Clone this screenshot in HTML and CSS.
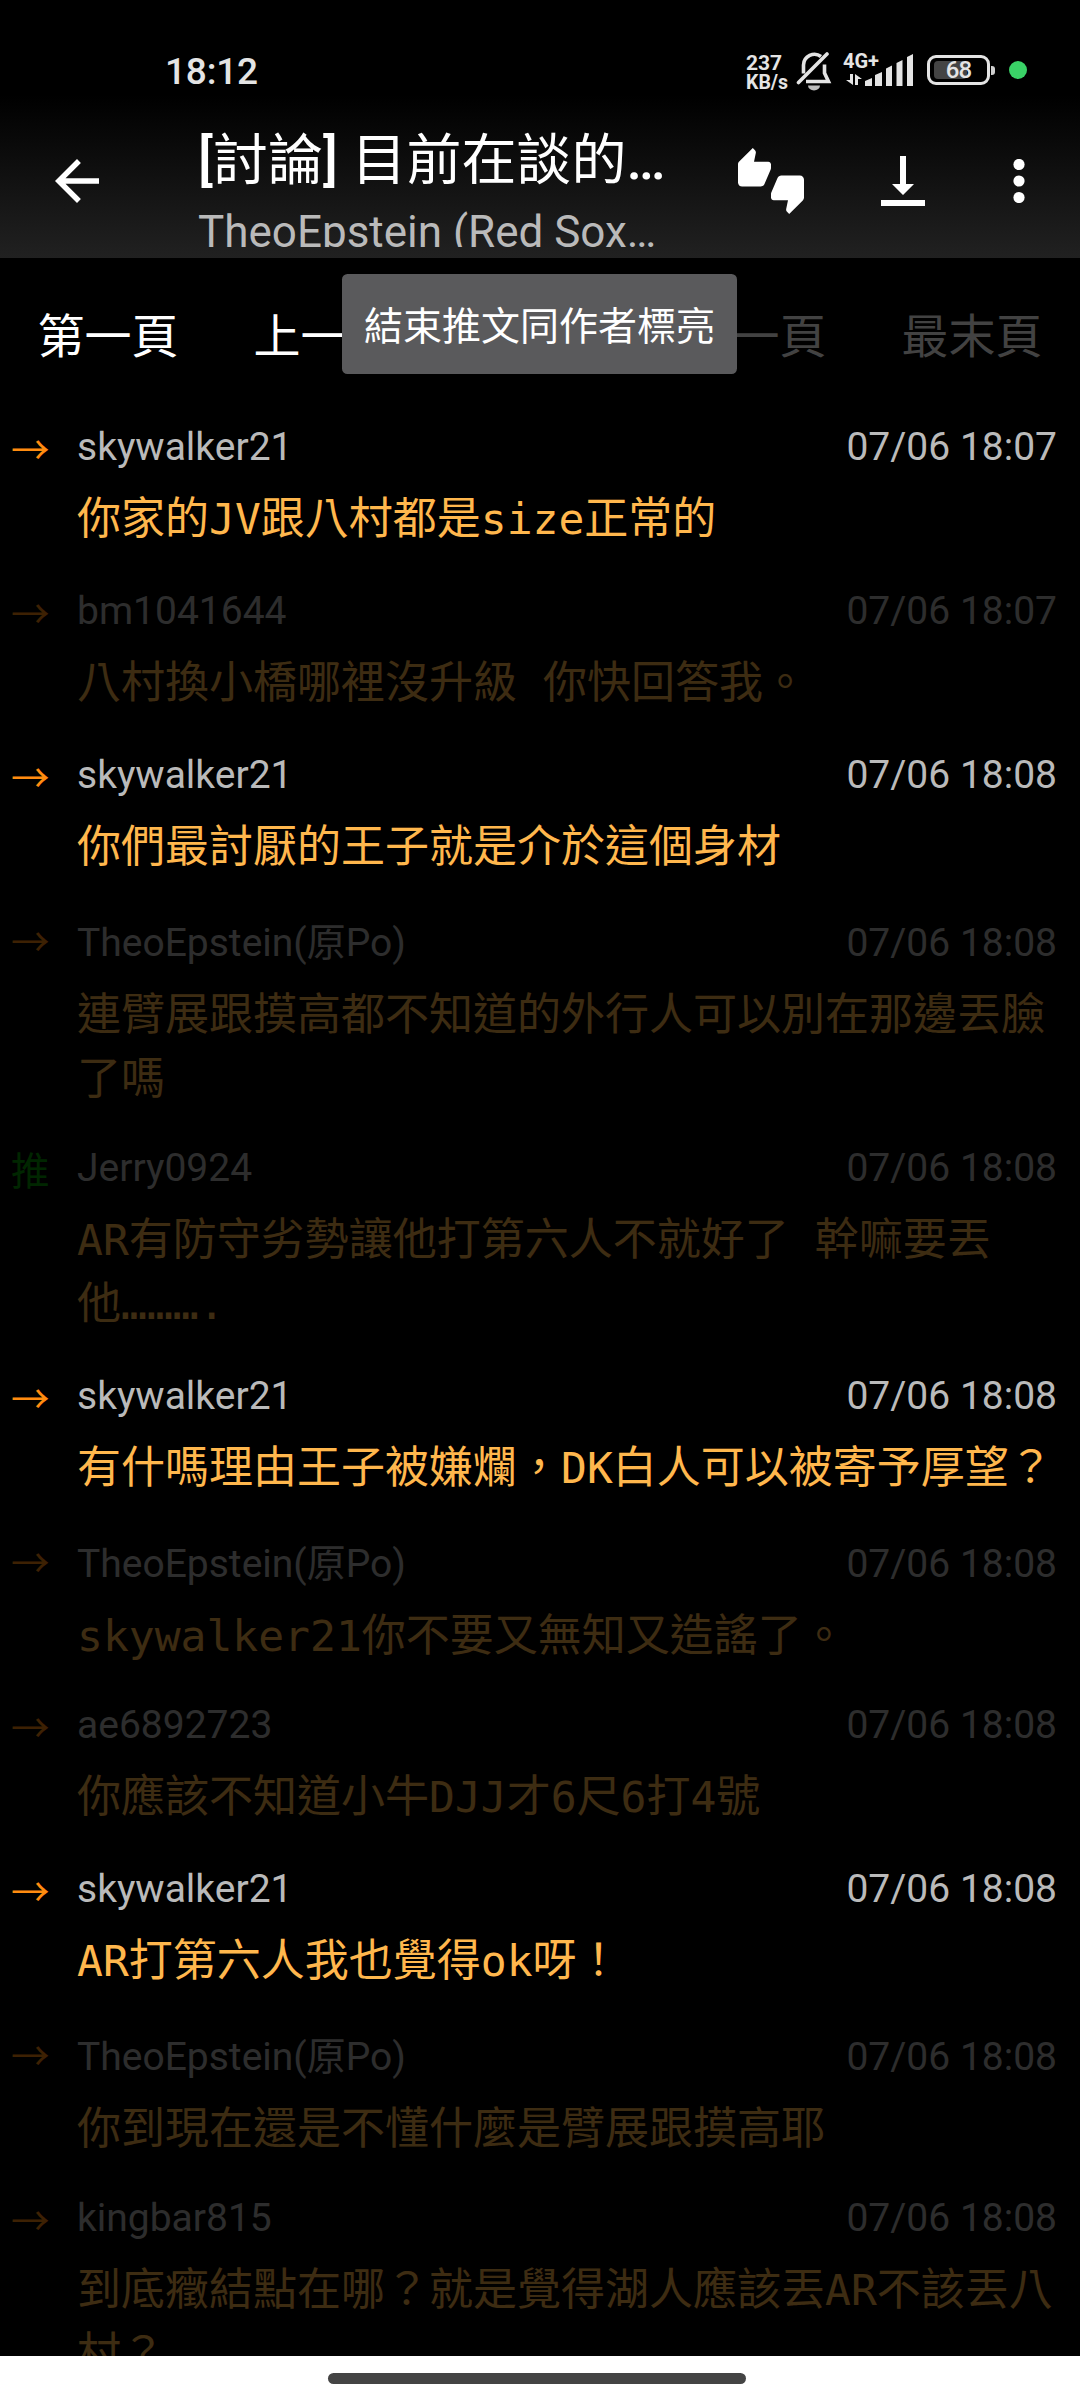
FILE: index.html
```html
<!DOCTYPE html>
<html lang="zh-Hant">
<head>
<meta charset="utf-8">
<title>[討論] 目前在談的</title>
<link rel="stylesheet" href="styles.css">
</head>
<body>
<div class="screen">
  <header class="top">
    <div class="status">
      <span class="clock">18:12</span>
      <div class="status-icons">
        <div class="speed"><span class="speed-num">237</span><span class="speed-unit">KB/s</span></div>
        <svg class="bell" width="36" height="40" viewBox="0 0 36 40" fill="none" stroke="#e4e4e4" stroke-width="3.6">
          <path d="M25 5.500A11 11 0 0 0 7.500 14V22.500M28.500 13.500V22L32.500 30.500H10"/>
          <path d="M2.500 31.500 31 3" stroke-linecap="round"/>
          <path d="M12 34.500H24A6 5 0 0 1 12 34.500Z" fill="#bdbdbd" stroke="none"/>
        </svg>
        <div class="signal">
          <span class="net">4G+</span>
          <svg class="bars" width="70" height="34" viewBox="0 0 70 34" fill="#e4e4e4">
            <path d="M22 28 29 25V33H22ZM32 22 39 19V33H32ZM43 15.500 49 12.500V33H43ZM53.500 10 59.500 7V33H53.500ZM64 4 70 1V33H64Z"/>
            <path d="M7 21H10V32L3 27H7ZM12 32V21L19 26H15V32Z"/>
          </svg>
        </div>
        <div class="battery"><span class="charge"></span><span class="level">68</span></div>
        <span class="cap"></span>
        <span class="dot"></span>
      </div>
    </div>
    <div class="appbar">
      <svg class="back" width="66" height="66" viewBox="0 0 24 24" fill="#fff"><path d="M20 11H7.830l5.590-5.590L12 4l-8 8 8 8 1.410-1.410L7.830 13H20v-2z"/></svg>
      <div class="titles">
        <div class="title">[<span class="han">討論</span>] <span class="han">目前在談的</span>…</div>
        <div class="subtitle">TheoEpstein (Red Sox…</div>
      </div>
      <svg class="thumbs" width="66" height="66" viewBox="0 0 24 24" fill="#fff"><path d="M12 6c0-.55-.45-1-1-1H5.820l.66-3.180.02-.23c0-.31-.13-.59-.33-.8L5.380 0 .44 4.940C.17 5.210 0 5.590 0 6v6.500c0 .83.67 1.500 1.500 1.500h6.750c.62 0 1.150-.38 1.380-.91l2.260-5.290c.07-.17.11-.36.11-.55V6zm10.500 4h-6.750c-.62 0-1.150.38-1.380.91l-2.260 5.290c-.07.17-.11.36-.11.55V18c0 .55.45 1 1 1h5.180l-.66 3.180-.02.24c0 .31.13.59.33.8l.79.78 4.940-4.940c.27-.27.44-.65.44-1.060v-6.500c0-.83-.67-1.500-1.500-1.500z"/></svg>
      <svg class="download" width="44" height="50" viewBox="0 0 44 50" fill="#fff"><path d="M19 0h6v28h8L22 39 11 28h8ZM0 44h44v6H0Z"/></svg>
      <svg class="more" width="12" height="44" viewBox="0 0 12 44" fill="#fff"><circle cx="6" cy="5.500" r="5.600"/><circle cx="6" cy="22" r="5.600"/><circle cx="6" cy="38.500" r="5.600"/></svg>
    </div>
  </header>
  <nav class="pager">
    <span class="page">第一頁</span>
    <span class="page">上一頁</span>
    <span class="page"></span>
    <span class="page off">下一頁</span>
    <span class="page off">最末頁</span>
    <div class="tooltip">結束推文同作者標亮</div>
  </nav>
  <main class="list">
    <article class="push"><span class="tag">→</span><div class="meta"><span class="name">skywalker21</span><time>07/06 18:07</time></div><p class="msg">你家的<span class="m">JV</span>跟八村都是<span class="m">size</span>正常的</p></article>
    <article class="push dim"><span class="tag">→</span><div class="meta"><span class="name">bm1041644</span><time>07/06 18:07</time></div><p class="msg">八村換小橋哪裡沒升級<span class="m"> </span>你快回答我。</p></article>
    <article class="push"><span class="tag">→</span><div class="meta"><span class="name">skywalker21</span><time>07/06 18:08</time></div><p class="msg">你們最討厭的王子就是介於這個身材</p></article>
    <article class="push dim op"><span class="tag">→</span><div class="meta"><span class="name">TheoEpstein(原Po)</span><time>07/06 18:08</time></div><p class="msg">連臂展跟摸高都不知道的外行人可以別在那邊丟臉<br>了嗎</p></article>
    <article class="push dim"><span class="tag up">推</span><div class="meta"><span class="name">Jerry0924</span><time>07/06 18:08</time></div><p class="msg"><span class="m">AR</span>有防守劣勢讓他打第六人不就好了<span class="m"> </span>幹嘛要丟<br>他<span class="m">……….</span></p></article>
    <article class="push"><span class="tag">→</span><div class="meta"><span class="name">skywalker21</span><time>07/06 18:08</time></div><p class="msg">有什嗎理由王子被嫌爛，<span class="m">DK</span>白人可以被寄予厚望？</p></article>
    <article class="push dim op"><span class="tag">→</span><div class="meta"><span class="name">TheoEpstein(原Po)</span><time>07/06 18:08</time></div><p class="msg"><span class="m">skywalker21</span>你不要又無知又造謠了。</p></article>
    <article class="push dim"><span class="tag">→</span><div class="meta"><span class="name">ae6892723</span><time>07/06 18:08</time></div><p class="msg">你應該不知道小牛<span class="m">DJJ</span>才<span class="m">6</span>尺<span class="m">6</span>打<span class="m">4</span>號</p></article>
    <article class="push"><span class="tag">→</span><div class="meta"><span class="name">skywalker21</span><time>07/06 18:08</time></div><p class="msg"><span class="m">AR</span>打第六人我也覺得<span class="m">ok</span>呀！</p></article>
    <article class="push dim op"><span class="tag">→</span><div class="meta"><span class="name">TheoEpstein(原Po)</span><time>07/06 18:08</time></div><p class="msg">你到現在還是不懂什麼是臂展跟摸高耶</p></article>
    <article class="push dim"><span class="tag">→</span><div class="meta"><span class="name">kingbar815</span><time>07/06 18:08</time></div><p class="msg">到底癥結點在哪？就是覺得湖人應該丟<span class="m">AR</span>不該丟八<br>村？</p></article>
  </main>
  <footer class="gesture"><span class="pill"></span></footer>
</div>
</body>
</html>
```
FILE: styles.css
```css
* { box-sizing: border-box; }
body {
  margin: 0;
  background: #000;
  color: #fff;
  font-family: Roboto, "Noto Sans CJK TC", sans-serif;
}
svg { display: block; flex: none; }
.screen {
  width: 1080px;
  height: 2400px;
  display: flex;
  flex-direction: column;
  overflow: hidden;
}

/* status bar and app bar share one gradient */
.top {
  flex: none;
  height: 258px;
  background: linear-gradient(#000 95px, #212121 258px);
}
.status {
  height: 104px;
  display: flex;
  justify-content: space-between;
  padding: 0 53px 0 165px;
  color: #e4e4e4;
}
.clock { font-size: 37px; font-weight: 500; line-height: 44px; padding-top: 50px; letter-spacing: -.2px; }
.status-icons { display: flex; align-items: flex-start; }
.speed {
  width: 50px;
  padding-top: 54px;
  display: flex;
  flex-direction: column;
  font-weight: 700;
  line-height: 19px;
}
.speed-num { font-size: 21px; }
.speed-unit { font-size: 19.500px; }
.bell { margin-top: 51px; }
.signal { width: 70px; margin: 52px 14px 0 11px; display: grid; }
.signal > * { grid-area: 1 / 1; }
.net { font-size: 20px; font-weight: 700; line-height: 18px; }
.bars { margin-top: 1px; }
.battery {
  width: 63px;
  height: 30px;
  margin-top: 55px;
  padding: 3px 4px;
  border: 3px solid #e4e4e4;
  border-radius: 9px;
  display: grid;
  align-items: center;
}
.battery > * { grid-area: 1 / 1; }
.charge { width: 33px; height: 18px; border-radius: 4px; background: #444; }
.level { text-align: center; font-size: 24px; font-weight: 500; line-height: 18px; letter-spacing: -1px; }
.cap { width: 4px; height: 9px; margin: 66px 14px 0 1px; background: #cfcfcf; border-radius: 0 3px 3px 0; }
.dot { width: 18px; height: 18px; margin-top: 61px; border-radius: 50%; background: #3ad267; }

.appbar { height: 154px; display: flex; padding-left: 44px; }
.back { margin-top: 44px; }
.titles { width: 476px; height: 143px; margin: 0 64px 0 88px; overflow: hidden; white-space: nowrap; }
.title { font-size: 55px; font-weight: 500; line-height: 72px; padding-top: 20px; }
.han { font-weight: 400; }
.subtitle { font-size: 44px; line-height: 52px; padding-top: 10px; color: #bababa; }
.thumbs { margin-top: 44px; }
.download { margin: 52px 88px 0 77px; }
.more { margin-top: 55px; }

.pager {
  flex: none;
  position: relative;
  height: 141px;
  display: grid;
  grid-template-columns: repeat(5, 216px);
  text-align: center;
  font-size: 47px;
  line-height: 157px;
}
.off { color: #424242; }
.tooltip {
  position: absolute;
  left: 342px;
  top: 16px;
  width: 395px;
  height: 100px;
  border-radius: 5.500px;
  background: #5a5a5c;
  font-size: 39px;
  line-height: 107px;
}

.list { flex: 1; min-height: 0; overflow: hidden; }
.push {
  display: grid;
  grid-template-columns: 66px 969px;
  grid-template-rows: 72px auto;
  padding: 12px 0 16px 11px;
}
.dim { opacity: .24; }
.tag { font: 38.500px/72px "Noto Sans CJK TC", sans-serif; color: #ff8c10; }
.up { color: #00a000; }
.meta { display: flex; justify-content: space-between; font-size: 39px; line-height: 72px; color: #bababa; width: 980px; }

.op { padding-bottom: 13px; grid-template-rows: 76px auto; }
.op .meta { line-height: 80px; }
.msg {
  grid-column: 2;
  margin: 0;
  font: 44px/64px "Noto Sans CJK TC", sans-serif;
  color: #ffb74d;
  white-space: nowrap;
}
.m { font: 43px/1 "DejaVu Sans Mono", monospace; white-space: pre; }

.gesture { flex: none; height: 44px; background: #fff; padding: 17px 0 0 328px; }
.pill { display: block; width: 418px; height: 11px; border-radius: 6px; background: #444; }
```
